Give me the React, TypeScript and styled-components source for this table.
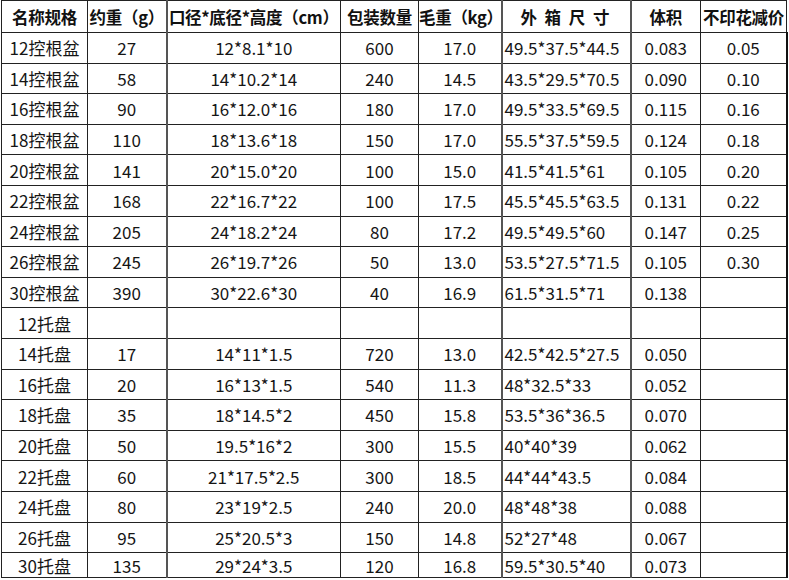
import React from 'react'
import styled, { createGlobalStyle } from 'styled-components'

const GlobalStyle = createGlobalStyle`
    html, body {
        margin: 0;
        padding: 0;
        background: #ffffff;
    }
    body {
        font-family: "Noto Sans CJK SC", "Noto Sans", sans-serif;
        color: #111;
    }
`

type Col = { width: number; heavy?: boolean; align?: 'left' | 'center'; spaced?: boolean }

const columns: Col[] = [
    { width: 86 },
    { width: 79, heavy: true },
    { width: 174 },
    { width: 78 },
    { width: 83, heavy: true },
    { width: 129, align: 'left', heavy: true, spaced: true },
    { width: 70 },
    { width: 86 },
]

const headers = ['名称规格', '约重（g）', '口径*底径*高度（cm）', '包装数量', '毛重（kg）', '外 箱 尺 寸', '体积', '不印花减价']

const rows: string[][] = [
    ['12控根盆', '27', '12*8.1*10', '600', '17.0', '49.5*37.5*44.5', '0.083', '0.05'],
    ['14控根盆', '58', '14*10.2*14', '240', '14.5', '43.5*29.5*70.5', '0.090', '0.10'],
    ['16控根盆', '90', '16*12.0*16', '180', '17.0', '49.5*33.5*69.5', '0.115', '0.16'],
    ['18控根盆', '110', '18*13.6*18', '150', '17.0', '55.5*37.5*59.5', '0.124', '0.18'],
    ['20控根盆', '141', '20*15.0*20', '100', '15.0', '41.5*41.5*61', '0.105', '0.20'],
    ['22控根盆', '168', '22*16.7*22', '100', '17.5', '45.5*45.5*63.5', '0.131', '0.22'],
    ['24控根盆', '205', '24*18.2*24', '80', '17.2', '49.5*49.5*60', '0.147', '0.25'],
    ['26控根盆', '245', '26*19.7*26', '50', '13.0', '53.5*27.5*71.5', '0.105', '0.30'],
    ['30控根盆', '390', '30*22.6*30', '40', '16.9', '61.5*31.5*71', '0.138', ''],
    ['12托盘', '', '', '', '', '', '', ''],
    ['14托盘', '17', '14*11*1.5', '720', '13.0', '42.5*42.5*27.5', '0.050', ''],
    ['16托盘', '20', '16*13*1.5', '540', '11.3', '48*32.5*33', '0.052', ''],
    ['18托盘', '35', '18*14.5*2', '450', '15.8', '53.5*36*36.5', '0.070', ''],
    ['20托盘', '50', '19.5*16*2', '300', '15.5', '40*40*39', '0.062', ''],
    ['22托盘', '60', '21*17.5*2.5', '300', '18.5', '44*44*43.5', '0.084', ''],
    ['24托盘', '80', '23*19*2.5', '240', '20.0', '48*48*38', '0.088', ''],
    ['26托盘', '95', '25*20.5*3', '150', '14.8', '52*27*48', '0.067', ''],
    ['30托盘', '135', '29*24*3.5', '120', '16.8', '59.5*30.5*40', '0.073', ''],
]

export default function App() {
    return (
        <>
            <GlobalStyle />
            <Page>
                <Sheet>
                    <colgroup>
                        {columns.map((c, i) => (
                            <col key={i} style={{ width: c.width }} />
                        ))}
                    </colgroup>
                    <thead>
                        <HeadRow>
                            {headers.map((h, i) => (
                                <HeadCell key={i} $heavy={columns[i].heavy} $spaced={columns[i].spaced}>
                                    {h}
                                </HeadCell>
                            ))}
                        </HeadRow>
                    </thead>
                    <tbody>
                        {rows.map((r, ri) => (
                            <BodyRow key={ri} $last={ri === rows.length - 1}>
                                {r.map((v, ci) => (
                                    <Cell key={ci} $heavy={columns[ci].heavy} $align={columns[ci].align ?? 'center'} $edge={ci === 7}>
                                        {v}
                                    </Cell>
                                ))}
                            </BodyRow>
                        ))}
                    </tbody>
                </Sheet>
            </Page>
        </>
    )
}

const Page = styled.div`
    width: 789px;
    height: 580px;
    padding: 0 0 0 1px;
    box-sizing: border-box;
    overflow: hidden;
`

const Sheet = styled.table`
    table-layout: fixed;
    border-collapse: collapse;
    width: 786px;
    border: 1.5px solid #1a1a1a;
`

const HeadRow = styled.tr`
    height: 32px;
`

const BodyRow = styled.tr<{ $last?: boolean }>`
    height: ${(p) => (p.$last ? '25px' : '30.6px')};
`

const HeadCell = styled.th<{ $heavy?: boolean; $spaced?: boolean }>`
    border: 1px solid #222;
    border-right: ${(p) => (p.$heavy ? '2px solid #555' : '1px solid #222')};
    padding: 0;
    font-size: 16.5px;
    font-weight: 700;
    white-space: pre;
    overflow: hidden;
    text-align: center;
    color: #111;
    letter-spacing: ${(p) => (p.$spaced ? '2px' : '-0.3px')};
`

const Cell = styled.td<{ $heavy?: boolean; $align: 'left' | 'center'; $edge?: boolean }>`
    border: 1px solid #222;
    border-right: ${(p) => (p.$heavy ? '2px solid #555' : p.$edge ? '2px solid #111' : '1px solid #222')};
    padding: ${(p) => (p.$align === 'left' ? '0 0 0 2px' : '0')};
    font-size: 17px;
    font-weight: 400;
    white-space: nowrap;
    overflow: hidden;
    text-align: ${(p) => p.$align};
    line-height: 1;
    color: #151515;
`
